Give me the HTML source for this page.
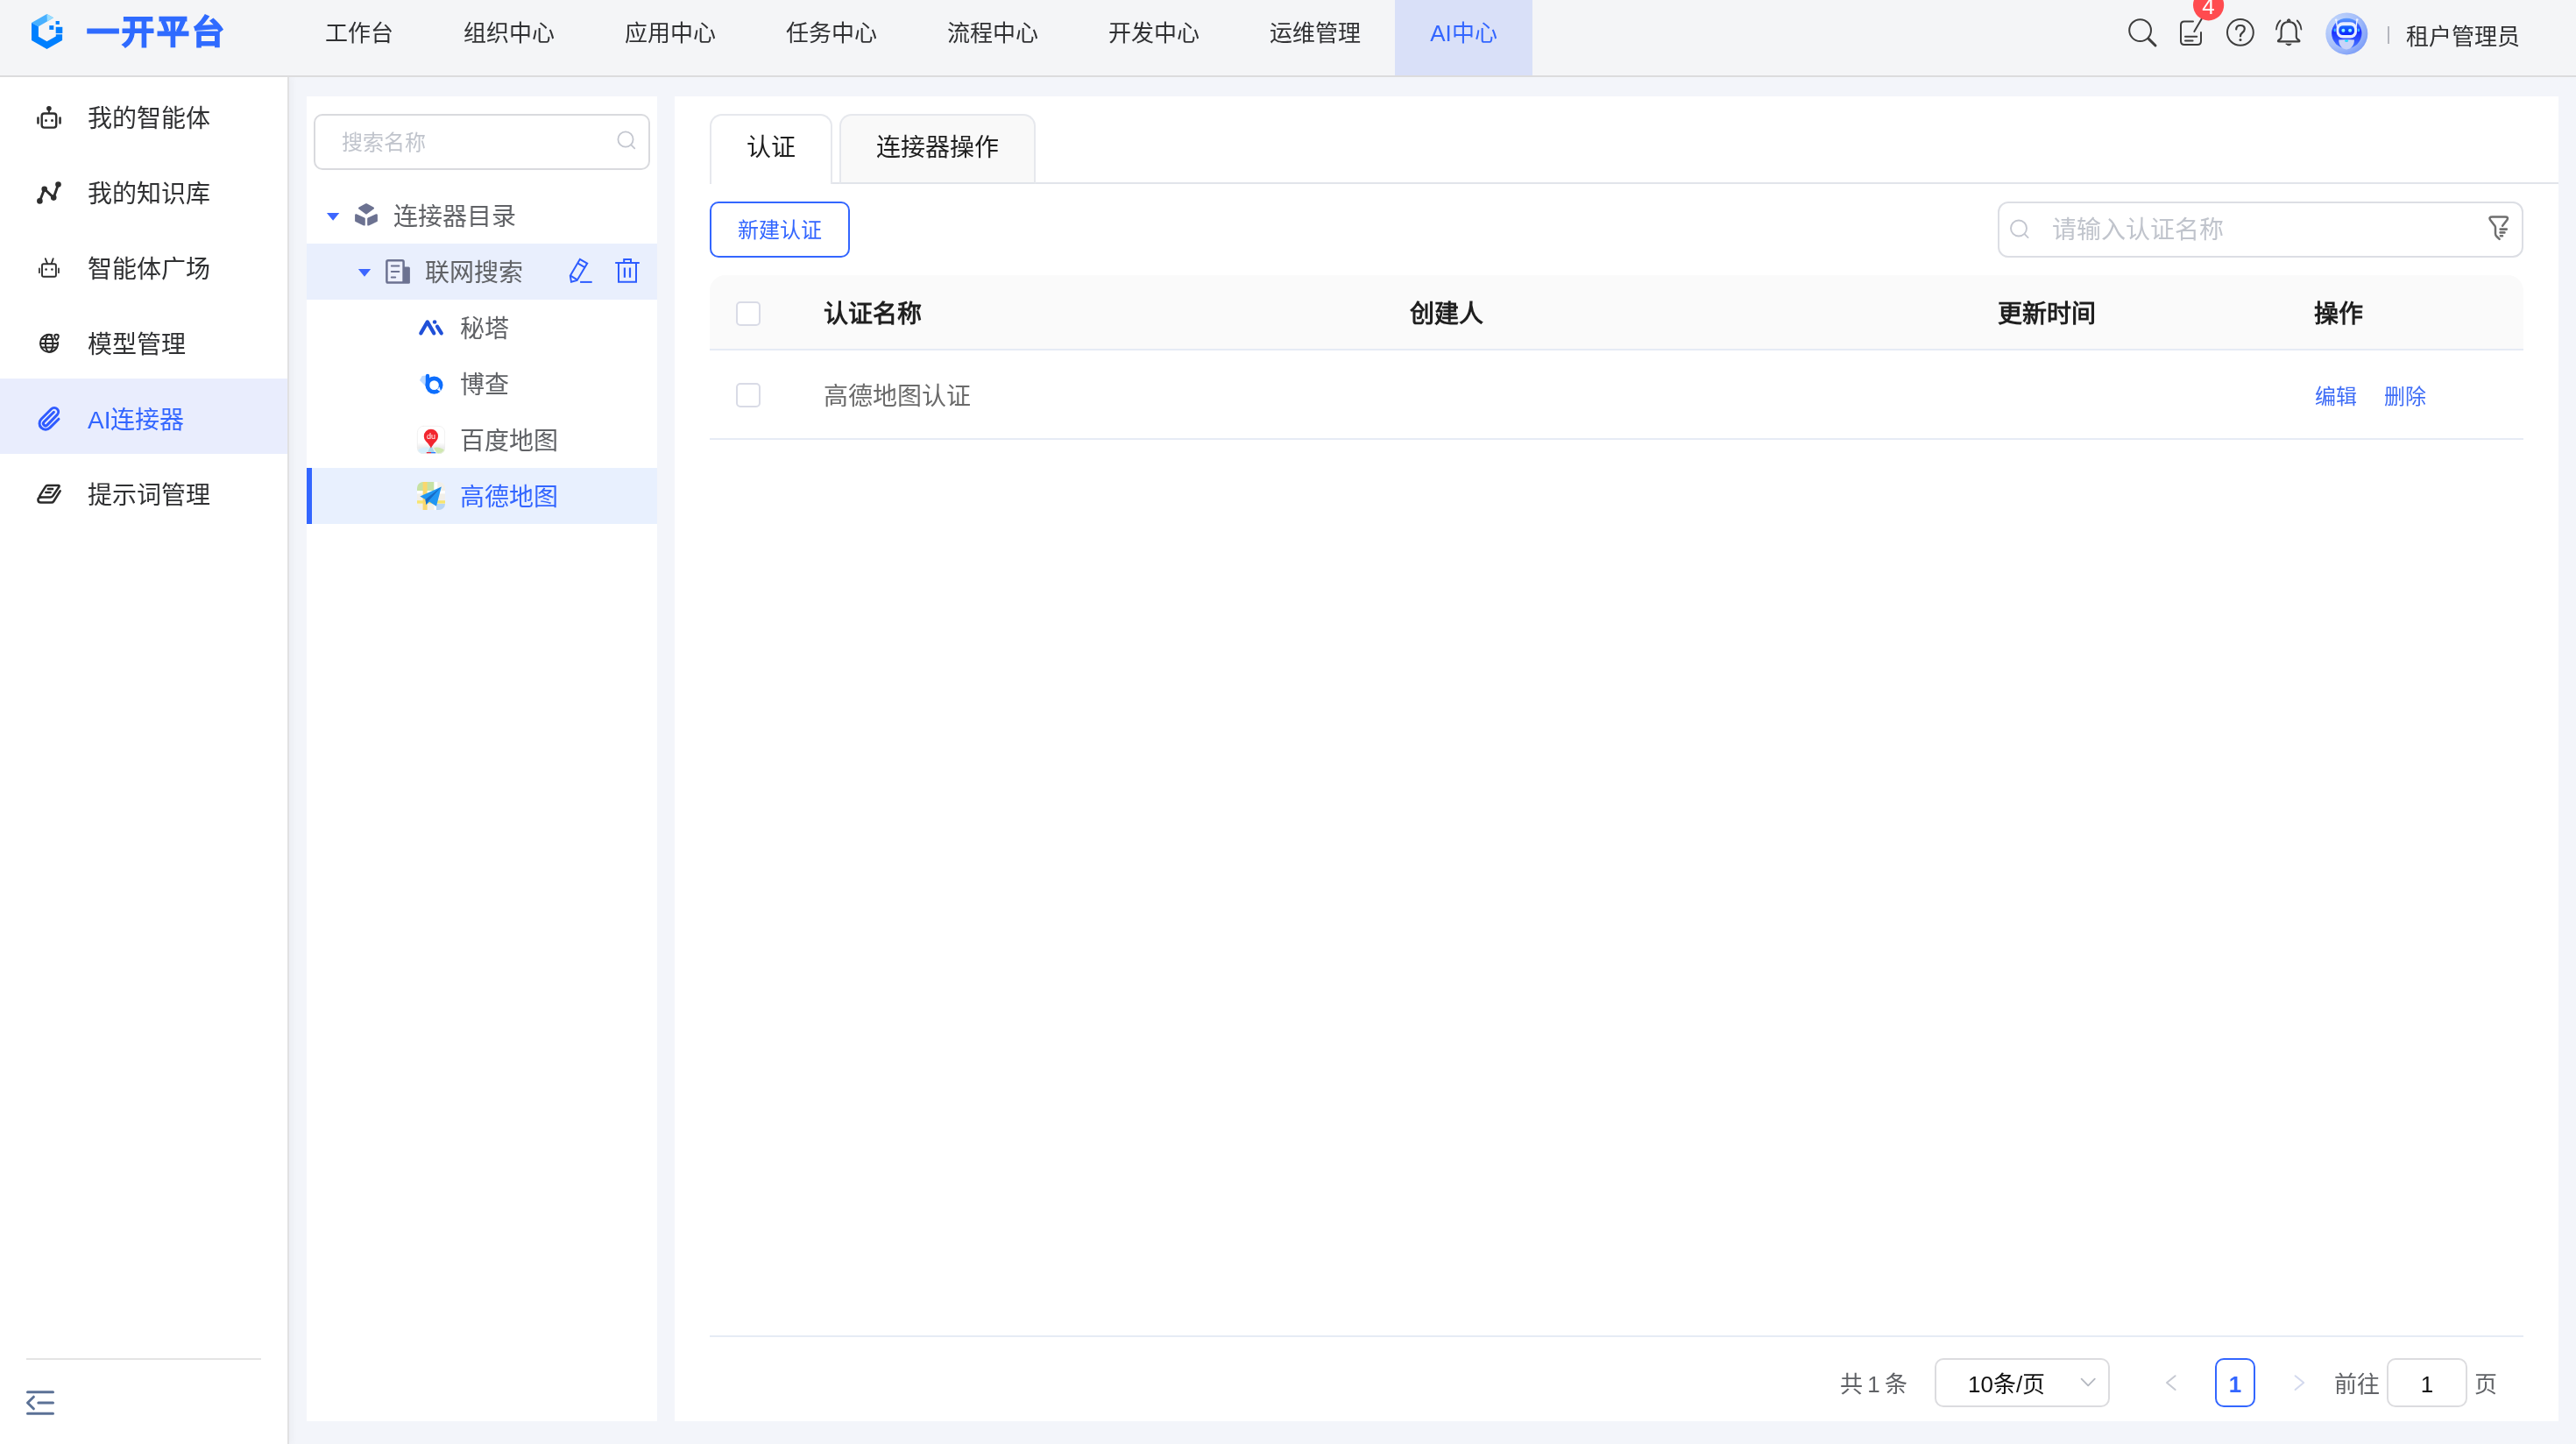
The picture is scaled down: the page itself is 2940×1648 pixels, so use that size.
<!DOCTYPE html>
<html lang="zh-CN">
<head>
<meta charset="utf-8">
<title>一开平台</title>
<style>
*{box-sizing:border-box;margin:0;padding:0}
html,body{width:2940px;height:1648px;overflow:hidden}
body{position:relative;background:#f3f5fa;will-change:transform;font-family:"Liberation Sans",sans-serif;color:#303133;font-size:28px}
.abs{position:absolute}
.t{position:absolute;white-space:nowrap;line-height:40px;height:40px}
svg{position:absolute;overflow:visible}
/* header */
#hdr{position:absolute;left:0;top:0;width:2940px;height:88px;background:#f4f5f7;border-bottom:2px solid #dcdcdd;z-index:2}
#hdr .nav{position:absolute;top:0;height:86px;line-height:76px;font-size:26px;color:#303133;text-align:center;white-space:nowrap}
#hdr .nav.on{background:#d9e0f8;color:#3366ff}
#title{position:absolute;left:99px;top:10px;height:56px;line-height:56px;letter-spacing:3px;font-size:37px;font-weight:700;color:#2f6bff;-webkit-text-stroke:1.6px #2f6bff;white-space:nowrap}
/* sidebar */
#side{position:absolute;left:0;top:88px;width:330px;height:1560px;background:#fff;border-right:2px solid #e1e1e2;box-shadow:3px 0 8px rgba(0,0,0,0.035)}
.mi{position:absolute;left:0;width:328px;height:86px}
.mi.on{background:#e9edfd}
.mi .t{left:100px;top:28px;font-size:28px;color:#303133}
.mi.on .t{color:#3366ff}
/* tree */
#tree{position:absolute;left:350px;top:110px;width:400px;height:1512px;background:#fff}
.tr{position:absolute;left:0;width:400px;height:64px}
.tr .t{top:14px;font-size:28px;color:#606266}
/* main */
#main{position:absolute;left:770px;top:110px;width:2150px;height:1512px;background:#fff}
.cb{width:28px;height:28px;border:2px solid #d9dbe6;border-radius:5px;background:#fff}
.th{font-size:28px;font-weight:700;color:#1f1f1f}
</style>
</head>
<body>
<!-- HEADER -->
<div id="hdr">
  <div id="title">一开平台</div>
  <div class="nav" style="left:331px;width:158px">工作台</div>
  <div class="nav" style="left:489px;width:184px">组织中心</div>
  <div class="nav" style="left:673px;width:184px">应用中心</div>
  <div class="nav" style="left:857px;width:184px">任务中心</div>
  <div class="nav" style="left:1041px;width:184px">流程中心</div>
  <div class="nav" style="left:1225px;width:184px">开发中心</div>
  <div class="nav" style="left:1409px;width:184px">运维管理</div>
  <div class="nav on" style="left:1592px;width:157px">AI中心</div>
  <div class="t" style="left:2746px;top:22px;font-size:26px;color:#303133">租户管理员</div>
  <div class="abs" style="left:2725px;top:30px;width:2px;height:20px;background:#b4b6bd"></div>
</div>
<!-- SIDEBAR -->
<div id="side">
  <div class="mi" style="top:0"><div class="t">我的智能体</div></div>
  <div class="mi" style="top:86px"><div class="t">我的知识库</div></div>
  <div class="mi" style="top:172px"><div class="t">智能体广场</div></div>
  <div class="mi" style="top:258px"><div class="t">模型管理</div></div>
  <div class="mi on" style="top:344px"><div class="t">AI连接器</div></div>
  <div class="mi" style="top:430px"><div class="t">提示词管理</div></div>
  <div class="abs" style="left:30px;top:1462px;width:268px;height:2px;background:#e4e4e4"></div>
</div>
<!-- TREE -->
<div id="tree">
  <div class="abs" style="left:8px;top:20px;width:384px;height:64px;border:2px solid #d9dade;border-radius:10px"></div>
  <div class="t" style="left:40px;top:33px;font-size:24px;color:#c0c4cc">搜索名称</div>
  <div class="tr" style="top:104px"><div class="t" style="left:99px">连接器目录</div></div>
  <div class="tr" style="top:168px;background:#e9effd"><div class="t" style="left:135px">联网搜索</div></div>
  <div class="tr" style="top:232px"><div class="t" style="left:175px">秘塔</div></div>
  <div class="tr" style="top:296px"><div class="t" style="left:175px">博查</div></div>
  <div class="tr" style="top:360px"><div class="t" style="left:175px">百度地图</div></div>
  <div class="tr" style="top:424px;background:#e8f0fe;border-left:6px solid #3366ff"><div class="t" style="left:169px;color:#3366ff">高德地图</div></div>
</div>
<!-- MAIN -->
<div id="main">
  <!-- tabs (coords relative to main: x-770, y-110) -->
  <div class="abs" style="left:40px;top:98px;width:2110px;height:2px;background:#e1e4ea"></div>
  <div class="abs" style="left:40px;top:20px;width:140px;height:80px;border:2px solid #e6e8ed;border-bottom:0;border-radius:14px 14px 0 0;background:#fff"></div>
  <div class="abs" style="left:188px;top:20px;width:224px;height:80px;border:2px solid #e6e8ed;border-bottom:2px solid #e1e4ea;border-radius:14px 14px 0 0;background:#f9f9f9"></div>
  <div class="t" style="left:82px;top:39px;font-size:28px;color:#1f1f1f">认证</div>
  <div class="t" style="left:230px;top:39px;font-size:28px;color:#1f1f1f">连接器操作</div>
  <!-- button -->
  <div class="abs" style="left:40px;top:120px;width:160px;height:64px;border:2px solid #3366ff;border-radius:10px;background:#fff"></div>
  <div class="t" style="left:72px;top:133px;font-size:24px;color:#3366ff;font-weight:500">新建认证</div>
  <!-- search -->
  <div class="abs" style="left:1510px;top:120px;width:600px;height:64px;border:2px solid #dcdee4;border-radius:12px;background:#fff"></div>
  <div class="t" style="left:1572px;top:133px;font-size:28px;color:#c0c4cc">请输入认证名称</div>
  <!-- table -->
  <div class="abs" style="left:40px;top:204px;width:2070px;height:86px;background:#fafafa;border-radius:18px 18px 0 0;border-bottom:2px solid #e6ebf5"></div>
  <div class="abs cb" style="left:70px;top:234px"></div>
  <div class="t th" style="left:170px;top:229px">认证名称</div>
  <div class="t th" style="left:839px;top:229px">创建人</div>
  <div class="t th" style="left:1510px;top:229px">更新时间</div>
  <div class="t th" style="left:1871px;top:229px">操作</div>
  <div class="abs cb" style="left:70px;top:327px"></div>
  <div class="t" style="left:170px;top:323px;font-size:28px;color:#6b6b6b">高德地图认证</div>
  <div class="t" style="left:1872px;top:323px;font-size:24px;color:#3f6df6">编辑</div>
  <div class="t" style="left:1951px;top:323px;font-size:24px;color:#3f6df6">删除</div>
  <div class="abs" style="left:40px;top:390px;width:2070px;height:2px;background:#e6ebf5"></div>
  <!-- footer -->
  <div class="abs" style="left:40px;top:1414px;width:2070px;height:2px;background:#e6ebf5"></div>
  <div class="t" style="left:1330px;top:1450px;font-size:26px;color:#606266;word-spacing:-2px">共 1 条</div>
  <div class="abs" style="left:1438px;top:1440px;width:200px;height:56px;border:2px solid #dcdcdf;border-radius:10px;background:#fff"></div>
  <div class="t" style="left:1476px;top:1450px;font-size:26px;color:#111">10条/页</div>
  <div class="abs" style="left:1758px;top:1440px;width:46px;height:56px;border:2px solid #3366ff;border-radius:10px;background:#fff"></div>
  <div class="t" style="left:1758px;top:1450px;width:46px;text-align:center;font-size:26px;color:#3366ff;font-weight:700">1</div>
  <div class="t" style="left:1894px;top:1450px;font-size:26px;color:#606266">前往</div>
  <div class="abs" style="left:1954px;top:1440px;width:92px;height:56px;border:2px solid #dcdcdf;border-radius:10px;background:#fff"></div>
  <div class="t" style="left:1954px;top:1450px;width:92px;text-align:center;font-size:26px;color:#111">1</div>
  <div class="t" style="left:2054px;top:1450px;font-size:26px;color:#606266">页</div>
</div>
<svg id="ico" width="2940" height="1648" viewBox="0 0 2940 1648" style="left:0;top:0;pointer-events:none;z-index:5" fill="none" stroke-linecap="round" stroke-linejoin="round">
<defs>
  <radialGradient id="avo" cx="0.3" cy="0.32" r="0.85"><stop offset="0" stop-color="#c6dafc"/><stop offset="0.55" stop-color="#a3bdfa"/><stop offset="1" stop-color="#6a8ff7"/></radialGradient>
  <linearGradient id="avi" x1="0" y1="0" x2="0" y2="1"><stop offset="0" stop-color="#5a9bff"/><stop offset="0.45" stop-color="#1a2dff"/><stop offset="1" stop-color="#4a7bff"/></linearGradient>
  <linearGradient id="avv" x1="0" y1="0" x2="0" y2="1"><stop offset="0" stop-color="#1a6bff"/><stop offset="1" stop-color="#0a22ff"/></linearGradient>
  <clipPath id="cpA"><rect x="476" y="550" width="32" height="32" rx="7"/></clipPath>
  <clipPath id="cpB"><rect x="476" y="486" width="32" height="32" rx="7"/></clipPath>
  <linearGradient id="bdg" x1="0" y1="0" x2="0" y2="1"><stop offset="0" stop-color="#ffffff"/><stop offset="0.6" stop-color="#ffffff"/><stop offset="0.78" stop-color="#ececec"/><stop offset="1" stop-color="#f6f6f6"/></linearGradient>
</defs>
<!-- logo -->
<g stroke="none">
  <polygon points="36,26.1 53.5,16 61.1,20.3 43.9,30.3" fill="#47b0ff"/>
  <polygon points="53.5,16 61.1,20.3 53.9,24.5" fill="#99ddff"/>
  <polygon points="36,26.1 43.9,30.3 43.9,41.7 53.5,47.2 63.8,41.4 63.8,39.3 71.1,39.3 71.1,46 53.5,56.1 36,46.1" fill="#0080ff"/>
  <rect x="63.6" y="24" width="4.2" height="3.9" fill="#0080ff"/>
  <rect x="56.3" y="29.1" width="5" height="4.8" fill="#0080ff"/>
  <rect x="63.7" y="30.8" width="7.6" height="7.3" fill="#0080ff"/>
</g>
<!-- header icons -->
<g stroke="#3d3d3d" stroke-width="2">
  <circle cx="2442.6" cy="34.6" r="12.4"/>
  <path d="M2452.3 44.4 L2460 52" stroke-width="3"/>
  <path d="M2503 24.5 H2493 Q2489 24.5 2489 28.5 V47 Q2489 51 2493 51 H2508 Q2512 51 2512 47 V37"/>
  <path d="M2494 41.8 H2507.3 M2494 46.5 H2502.6" stroke-width="2"/>
  <path d="M2504.3 36 L2512.8 21.5" stroke-width="2"/>
  <circle cx="2556.9" cy="36.9" r="14.9"/>
  <path d="M2552.2 33.5 Q2552.2 29 2557 29 Q2561.8 29 2561.8 33 Q2561.8 35.5 2559 37.5 Q2557 39 2557 41.5" stroke-width="2.2"/>
  <!-- bell -->
  <path d="M2603.6 42.5 V35 Q2603.6 25 2612.2 25 Q2620.8 25 2620.8 35 V42.5 Q2620.8 44 2623.6 45.6 Q2625.6 47.4 2623.2 47.4 H2601.2 Q2598.8 47.4 2600.8 45.6 Q2603.6 44 2603.6 42.5Z" stroke-width="2.1"/>
  <path d="M2610.9 23.4 Q2612.2 21 2613.5 23.4" stroke-width="2"/>
  <path d="M2602.5 23.5 Q2598.5 27.5 2598 33.5 M2621.8 23.5 Q2625.8 27.5 2626.4 33.5" stroke-width="1.8"/>
</g>
<circle cx="2557" cy="45.4" r="1.5" fill="#3d3d3d"/>
<path d="M2609.2 50.2 H2615.2 Q2612.2 53.6 2609.2 50.2 Z" fill="#3d3d3d" stroke="#3d3d3d" stroke-width="1"/>
<!-- badge -->
<circle cx="2520.6" cy="5.8" r="17.6" fill="#ff4b4f"/>
<!-- avatar -->
<circle cx="2678.3" cy="38.4" r="24" fill="url(#avo)" opacity="0.95"/>
<circle cx="2678.3" cy="38" r="17.2" fill="url(#avi)"/>
<g stroke="#eef3ff" stroke-width="1.4"><path d="M2666.3 23.2 L2667.3 30 M2690.1 23 L2689.1 30"/></g>
<circle cx="2666.2" cy="22.8" r="1.3" fill="#eef3ff"/><circle cx="2690.2" cy="22.6" r="1.3" fill="#eef3ff"/>
<rect x="2666.5" y="25.2" width="23.6" height="18.2" rx="7.5" fill="#e8eeff"/>
<rect x="2669.3" y="29.2" width="17.8" height="10.8" rx="4.6" fill="url(#avv)"/>
<circle cx="2674.4" cy="34.8" r="2" fill="#8ff6ff"/><circle cx="2682.1" cy="34.8" r="2" fill="#8ff6ff"/>
<path d="M2669.2 45.6 Q2678.1 44.4 2687 45.6 C2687 51.4 2683.4 56.4 2678.1 56.4 C2672.8 56.4 2669.2 51.4 2669.2 45.6Z" fill="#c9d3f8"/>
<rect x="2663.6" y="32.6" width="2.2" height="3.6" rx="1" fill="#35b8ff"/><rect x="2690.8" y="32.6" width="2.2" height="3.6" rx="1" fill="#35b8ff"/>
<ellipse cx="2678.1" cy="46.6" rx="2.2" ry="1.3" fill="#22d8ff"/>
<!-- sidebar icons -->
<g stroke="#2e2e2e">
  <rect x="47.7" y="129.5" width="16.5" height="16.1" rx="2.8" stroke-width="2.4"/>
  <path d="M55.9 125 V129" stroke-width="2"/>
  <path d="M43.45 134.6 V140.5 M68.55 134.6 V140.5" stroke-width="2.5"/>
  <path d="M45.4 229.4 L50.7 215.7 L61.2 225.6 L66.5 210.5" stroke-width="2.9"/>
  <rect x="48" y="301.3" width="15.9" height="14.5" rx="1.8" stroke-width="1.9"/>
  <path d="M51.8 295.1 L54 300.7 M60.7 295.1 L58.7 300.7" stroke-width="1.8"/>
  <path d="M44.9 306.4 V311.2 M66.95 306.4 V311.2" stroke-width="1.7"/>
</g>
<g fill="#2e2e2e">
  <circle cx="55.9" cy="123.8" r="2.8"/>
  <circle cx="52.5" cy="137.5" r="1.5"/><circle cx="59.5" cy="137.5" r="1.5"/>
  <circle cx="45.4" cy="229.4" r="3.3"/><circle cx="50.7" cy="215.7" r="3.3"/><circle cx="61.2" cy="225.6" r="3.3"/><circle cx="66.5" cy="210.5" r="3.3"/>
  <circle cx="52.6" cy="307.5" r="1.3"/><circle cx="59.4" cy="307.5" r="1.3"/>
</g>
<!-- globe -->
<g stroke="#2a2a2a" stroke-width="2">
  <path d="M59.4 382.4 A10 10 0 1 0 66 390.8"/>
  <ellipse cx="56.1" cy="391.9" rx="4.3" ry="9.8"/>
  <path d="M46.3 391.9 H65.8 M47.6 386.9 H61 M47.6 396.5 H64.6"/>
  <path d="M64.5 388.3 Q62.2 385.9 62.2 384 A2.3 2.3 0 0 1 66.8 384 Q66.8 385.9 64.5 388.3Z" stroke-width="2"/>
</g>
<!-- paperclip -->
<g transform="translate(56 478) rotate(-45)" stroke="#2f5bff" stroke-width="3">
  <path d="M7.6 7.9 L-6.5 7.9 A7 7 0 0 1 -6.5 -6.1 L9.76 -6.1 A4.7 4.7 0 0 1 9.76 3.3 L-6.6 3.5 A2.55 2.55 0 0 1 -6.6 -1.6 L9.3 -1.6"/>
</g>
<!-- book -->
<g stroke="#2a2a2a" stroke-width="2.5">
  <path d="M54 554.1 H66.5 Q68.3 554.1 67.3 555.8 L60.3 566 Q59.2 567.5 57.3 567.5 H46.8 Q44.2 567.5 45.6 565.3 L52 555.3 Q52.8 554.1 54 554.1Z"/>
  <path d="M46.4 567.5 Q43.4 567.8 43.4 570.6 Q43.4 573.6 46.6 573.6 H58.6 Q60.4 573.6 61.4 572 L68.7 560.4"/>
  <path d="M54.8 558.1 H60.1 M52.3 562 H57.6"/>
</g>
<!-- collapse -->
<g stroke="#5b7196" stroke-width="3">
  <path d="M31.5 1588.8 H60.5 M43.8 1601 H60.5 M31.5 1613.2 H60.5 M38.4 1594.2 L31.5 1601 L38.4 1607.8"/>
</g>
<!-- tree search icon -->
<g stroke="#c3c6cf" stroke-width="1.8"><circle cx="714" cy="159" r="8.6"/><path d="M720.3 165.3 L724.3 169.3"/></g>
<!-- carets -->
<path d="M372.9 243.1 H387.3 L380.1 251.8Z" fill="#3d66ff"/>
<path d="M408.9 307.1 H423.2 L416 315.8Z" fill="#3d66ff"/>
<!-- cube -->
<g fill="#6c7291" stroke="#6c7291" stroke-width="2.4">
  <path d="M418 233.4 L425.8 237.6 L418 243.4 L410.2 237.6Z"/>
  <path d="M406.3 245.4 L415.6 249.6 V256.4 L406.3 252Z"/>
  <path d="M429.7 245.4 L420.4 249.6 V256.4 L429.7 252Z"/>
</g>
<!-- doc icon -->
<rect x="460" y="304.4" width="7.9" height="19.4" rx="1.5" fill="#6c7291"/>
<rect x="441.4" y="297.2" width="19.2" height="25.4" rx="1.6" stroke="#6c7291" stroke-width="2.5" fill="#eef1fd"/>
<path d="M446.8 303.4 H455.4 M446.8 309.9 H455.4 M446.8 316.4 H451.2" stroke="#6c7291" stroke-width="2"/>
<!-- pencil -->
<g stroke="#2d5cff" stroke-width="2" stroke-linejoin="miter" stroke-linecap="butt">
  <path d="M661.9 295.8 L670.2 300.6 L658.6 320 L652 321.8 L650.8 314.7Z"/>
  <path d="M659.3 300.4 L667.4 305.1 M651.2 314.6 L658.5 319.2"/>
  <path d="M662.1 321.9 H675.7"/>
</g>
<!-- trash -->
<g stroke="#2d5cff" stroke-width="2" stroke-linejoin="miter" stroke-linecap="butt">
  <path d="M702.2 300 H729.8 M712.2 300 V296 H720 V300 M706 301 V321.8 H726 V301"/>
  <path d="M712.9 305.4 V316.8 M719 305.4 V316.8" stroke-width="2.2"/>
</g>
<!-- metaso -->
<g stroke="#2050d8" stroke-width="4.2">
  <path d="M480.3 380.4 L487.8 367.4 L495.3 380.4 M499 372.6 L503.8 380.4"/>
</g>
<circle cx="496.1" cy="367.5" r="2.3" fill="#2050d8"/>
<!-- bocha -->
<polygon points="478.9,434 481.8,429 486,428.5 486,441" fill="#bcd9ff"/>
<circle cx="495.5" cy="439.6" r="7.7" stroke="#0d6efd" stroke-width="4.7"/>
<path d="M488 429 V440" stroke="#0d6efd" stroke-width="4.4" stroke-linecap="round"/>
<path d="M499.5 444.5 L502.5 446.5 L501.5 442.5Z" fill="#fff" stroke="#fff" stroke-width="0.8"/>
<!-- baidu map -->
<g clip-path="url(#cpB)">
  <rect x="476" y="486" width="32" height="32" fill="url(#bdg)"/>
  <path d="M476 514 Q484 509 490 511 L486 518 H476Z" fill="#d6eefb"/>
  <path d="M508 514 Q501 509 495 511 L499 518 H508Z" fill="#cfe8b0"/>
  <path d="M491.9 508 L487 518 H497Z" fill="#a9d9ee"/>
  <rect x="486.8" y="516" width="5.2" height="2" fill="#e8243c"/><rect x="492" y="516" width="5.2" height="2" fill="#2b7bff"/>
</g>
<rect x="476.4" y="486.4" width="31.2" height="31.2" rx="6.8" stroke="#ededed" stroke-width="0.8"/>
<path d="M491.9 511.4 Q489.5 506.5 486 503.4 A8.1 8.1 0 1 1 497.8 503.4 Q494.3 506.5 491.9 511.4Z" fill="#f2262f"/>
<!-- amap -->
<g clip-path="url(#cpA)">
  <rect x="476" y="550" width="32" height="32" fill="#f1efe9"/>
  <rect x="476" y="550" width="19.5" height="10" fill="#c6e2a4"/>
  <rect x="495.5" y="550" width="3.8" height="32" fill="#fff"/>
  <rect x="476" y="560" width="32" height="3.4" fill="#fff"/>
  <rect x="476" y="571.2" width="32" height="3.4" fill="#f7e56f"/>
  <rect x="482.6" y="550" width="5" height="32" fill="#f9d76e"/>
  <rect x="498" y="575" width="10" height="7" fill="#b6d5f5"/>
</g>
<polygon points="479.3,566.6 503.8,555.4 498,577.8 490.1,572.8 486.4,576.1 485.5,569.9" fill="#2196f3"/>
<polygon points="485.5,569.9 503.8,555.4 488.4,572.4 486.4,576.1" fill="#1769c4"/>
<!-- main search icon -->
<g stroke="#c3c6cf" stroke-width="1.9"><circle cx="2304" cy="260.5" r="9"/><path d="M2310.6 267.1 L2314.6 271.1"/></g>
<!-- filter -->
<g stroke="#6f6f6f" stroke-width="2.5">
  <path d="M2856.1 257.8 L2861.3 251 Q2863.4 247.4 2859.1 247.4 H2844.5 Q2840 247.4 2842.2 251 L2847.4 257.8 Q2848 258.6 2848 260 V266.4 Q2848 268.6 2849.6 270 L2852.6 272.8"/>
  <path d="M2853.6 261.6 H2860.8 M2853.6 265.4 H2858.4 M2853.9 269.2 H2856" stroke-width="2.6"/>
</g>
<!-- pagination -->
<g stroke="#b4b8c0" stroke-width="1.8"><path d="M2375.6 1573.6 L2383.2 1581.4 L2390.8 1573.6"/></g>
<g stroke="#c6c9d2" stroke-width="2"><path d="M2482.6 1570.2 L2473 1578 L2482.6 1586"/></g>
<g stroke="#d3d9ee" stroke-width="2"><path d="M2619.6 1570.2 L2629.2 1578 L2619.6 1586"/></g>
</svg>
<div class="t" style="z-index:6;left:2503px;top:-8px;width:35px;text-align:center;font-size:26px;line-height:30px;height:30px;color:#fff">4</div>
<div class="t" style="z-index:6;left:483.9px;top:491.5px;width:16px;text-align:center;font-size:9px;line-height:12px;height:12px;color:#fff;font-weight:400">du</div>
</body>
</html>
